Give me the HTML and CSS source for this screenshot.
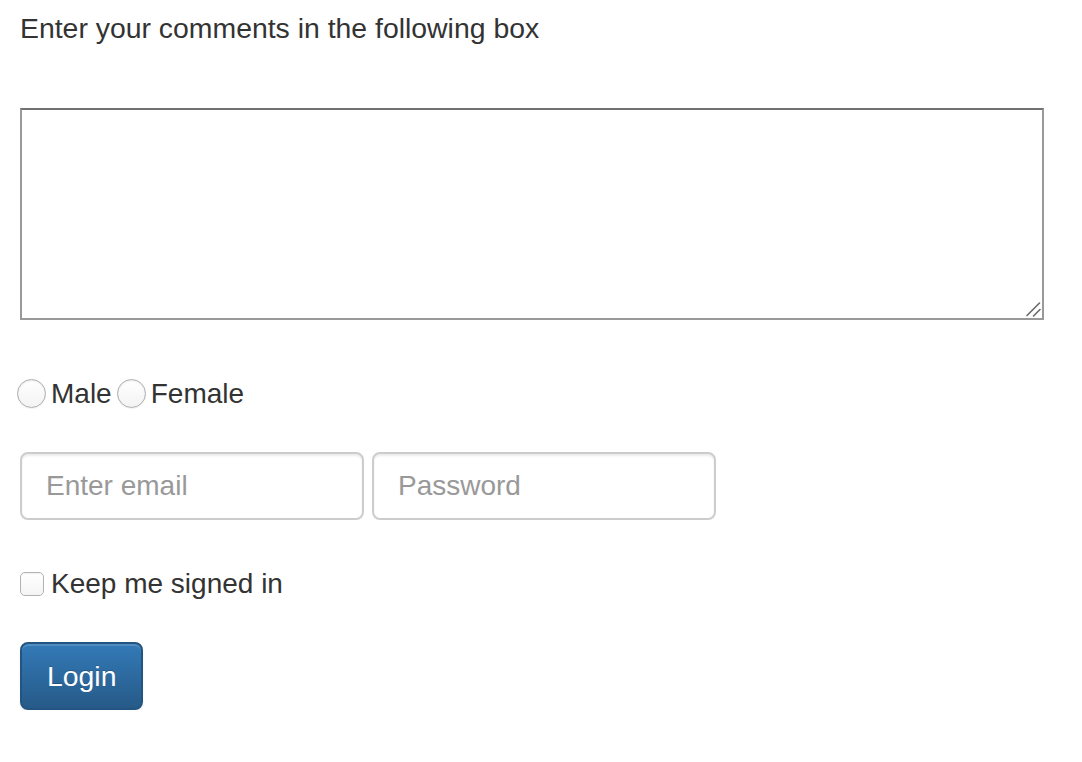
FILE: index.html
```html
<!DOCTYPE html>
<html lang="en">
<head>
<meta charset="utf-8">
<title>Comments form</title>
<link rel="stylesheet" href="styles.css">
</head>
<body>
<form class="page">
  <p class="intro">Enter your comments in the following box</p>
  <div class="comments-wrap">
    <textarea class="comments"></textarea>
    <svg class="grip" width="16" height="16" viewBox="0 0 16 16" aria-hidden="true">
      <path d="M2 14.5 L14.5 2 M8.5 15 L15 8.5" stroke="#6a6a6a" stroke-width="1.6" stroke-linecap="round" fill="none"/>
    </svg>
  </div>
  <div class="radio-row">
    <label class="choice"><input type="radio" name="gender" class="radio">Male</label>
    <label class="choice"><input type="radio" name="gender" class="radio">Female</label>
  </div>
  <div class="fields">
    <input type="email" class="field" placeholder="Enter email">
    <input type="password" class="field" placeholder="Password">
  </div>
  <label class="keep"><input type="checkbox" class="check">Keep me signed in</label>
  <div class="actions">
    <button type="button" class="btn">Login</button>
  </div>
</form>
</body>
</html>
```
FILE: styles.css
```css
* { box-sizing: border-box; }
html, body { margin: 0; padding: 0; background: #fff; }
body {
  font-family: "Liberation Sans", Arial, Helvetica, sans-serif;
  font-size: 28.4px;
  line-height: 40px;
  color: #333;
}
.page {
  display: flex;
  flex-direction: column;
  align-items: flex-start;
  padding: 8px 20px 0 20px;
}
.intro { margin: 0; }
.comments-wrap {
  position: relative;
  margin-top: 60px;
  width: 1024px;
  height: 212px;
}
.comments {
  width: 100%;
  height: 100%;
  border: 2px solid #999;
  border-top-color: #717171;
  resize: none;
  font: inherit;
  padding: 4px;
  display: block;
}
.grip {
  position: absolute;
  right: 3px;
  bottom: 3px;
  pointer-events: none;
}
.radio-row {
  margin-top: 54px;
  display: flex;
  align-items: center;
  gap: 5px;
  margin-left: -3px;
  font-size: 28px;
}
.choice {
  display: inline-flex;
  align-items: center;
}
.radio {
  appearance: none;
  -webkit-appearance: none;
  width: 29px;
  height: 29px;
  margin: -2px 5px 0 0;
  border-radius: 50%;
  border: 1px solid #adadad;
  background: linear-gradient(#ffffff, #f3f3f3);
  box-shadow: inset 0 1px 2px rgba(0,0,0,0.08), 0 1px 1px rgba(0,0,0,0.05);
}
.fields {
  margin-top: 38px;
  display: flex;
  gap: 8px;
}
.field {
  width: 344px;
  height: 68px;
  padding: 12px 24px;
  border: 2px solid #ccc;
  border-radius: 8px;
  box-shadow: inset 0 2px 2px rgba(0,0,0,0.075);
  font: inherit;
  font-size: 28px;
  color: #555;
  background: #fff;
}
.field::placeholder { color: #999; }
.keep {
  margin-top: 44px;
  display: inline-flex;
  align-items: center;
  font-size: 28px;
}
.check {
  appearance: none;
  -webkit-appearance: none;
  width: 24px;
  height: 24px;
  margin: 0 7px 0 0;
  border-radius: 5px;
  border: 1px solid #b3b3b3;
  background: linear-gradient(#ffffff, #f4f4f4);
  box-shadow: inset 0 1px 1px rgba(0,0,0,0.06);
}
.actions { margin-top: 38px; }
.btn {
  font: inherit;
  color: #fff;
  height: 68px;
  padding: 12px 25px;
  border: 2px solid #245580;
  border-radius: 8px;
  background: linear-gradient(to bottom, #337ab7 0%, #265a88 100%);
  box-shadow: inset 0 2px 0 rgba(255,255,255,0.15), 0 2px 2px rgba(0,0,0,0.075);
  text-shadow: 0 -1px 0 rgba(0,0,0,0.2);
  cursor: pointer;
}
```
